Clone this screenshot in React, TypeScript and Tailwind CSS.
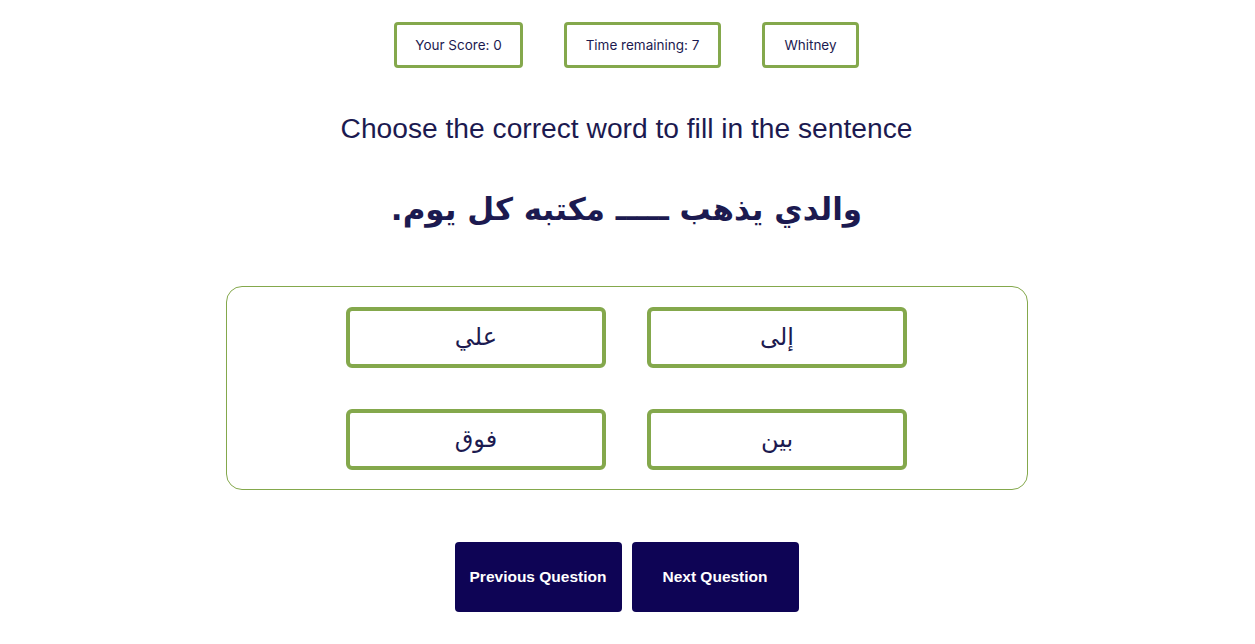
const options = ["إلى", "علي", "بين", "فوق"];

function StatBox({ label, width }: { label: string; width: string }) {
  return (
    <div
      className={`${width} h-[46px] flex items-center justify-center border-[3px] border-[#84a84c] rounded-[4px] text-[13.5px] text-[#1c1a50]`}
    >
      {label}
    </div>
  );
}

export default function App() {
  return (
    <div className="w-full min-h-screen bg-white pr-[2px] flex flex-col items-center font-['Inter','Liberation_Sans',sans-serif] text-[#1c1a50]">
      {/* header stats */}
      <div className="flex gap-[41px] mt-[22px]">
        <StatBox label="Your Score: 0" width="w-[129px]" />
        <StatBox label="Time remaining: 7" width="w-[157px]" />
        <StatBox label="Whitney" width="w-[97px]" />
      </div>

      <h1 className="mt-[41px] text-[28.2px] leading-[38px] font-['Liberation_Sans',sans-serif]">
        Choose the correct word to fill in the sentence
      </h1>

      <h2
        dir="rtl"
        className="mt-[37px] text-[31px] leading-[50px] font-bold font-['DejaVu_Sans',sans-serif]"
      >
        والدي يذهب ـــــ مكتبه كل يوم.
      </h2>

      {/* answer options */}
      <div className="mt-[52px] w-[802px] h-[204px] border border-[#84a84c] rounded-[16px] flex items-center justify-center">
        <div dir="rtl" className="grid grid-cols-2 gap-[41px]">
          {options.map((o) => (
            <button
              key={o}
              className="w-[260px] h-[61px] border-[4px] border-[#84a84c] rounded-[6px] flex items-center justify-center text-[24px] font-['DejaVu_Sans',sans-serif] text-[#1c1a50] bg-white"
            >
              {o}
            </button>
          ))}
        </div>
      </div>

      {/* navigation */}
      <div className="flex gap-[10px] mt-[52px]">
        <button className="w-[167px] h-[70px] rounded-[4px] bg-[#0e0455] text-white text-[15.5px] font-bold font-['Liberation_Sans',sans-serif]">
          Previous Question
        </button>
        <button className="w-[167px] h-[70px] rounded-[4px] bg-[#0e0455] text-white text-[15.5px] font-bold font-['Liberation_Sans',sans-serif]">
          Next Question
        </button>
      </div>
    </div>
  );
}
